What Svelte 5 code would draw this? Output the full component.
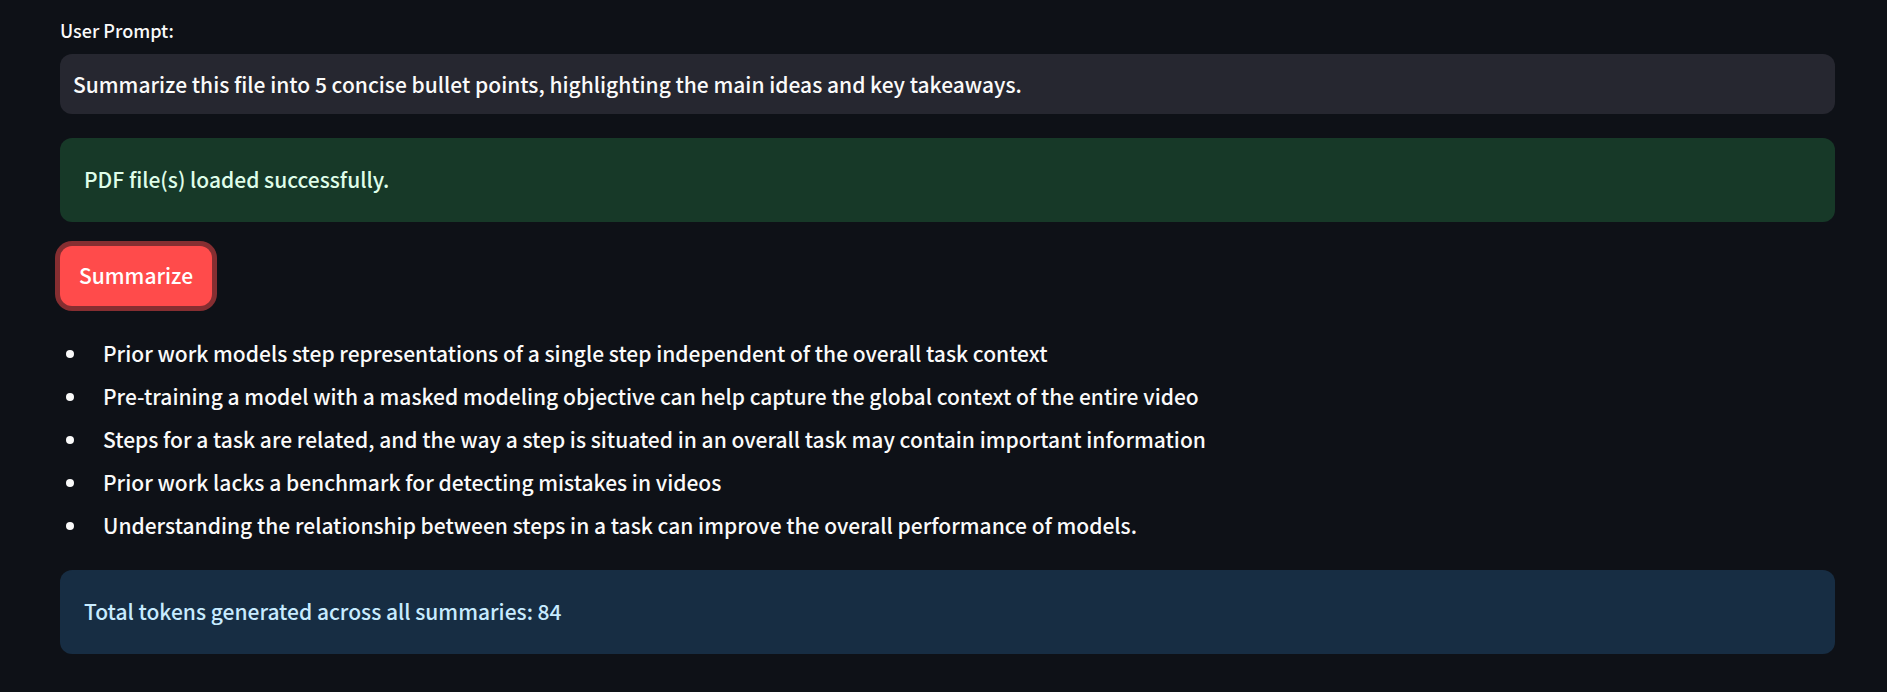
<script>
  let prompt = $state('Summarize this file into 5 concise bullet points, highlighting the main ideas and key takeaways.');
  const points = [
    'Prior work models step representations of a single step independent of the overall task context',
    'Pre-training a model with a masked modeling objective can help capture the global context of the entire video',
    'Steps for a task are related, and the way a step is situated in an overall task may contain important information',
    'Prior work lacks a benchmark for detecting mistakes in videos',
    'Understanding the relationship between steps in a task can improve the overall performance of models.'
  ];
</script>

<main>
  <label for="prompt">User Prompt:</label>
  <input id="prompt" type="text" bind:value={prompt} />
  <div class="alert success" role="status">PDF file(s) loaded successfully.</div>
  <button type="button">Summarize</button>
  <ul>
    {#each points as point}
      <li>{point}</li>
    {/each}
  </ul>
  <div class="alert info" role="status">Total tokens generated across all summaries: 84</div>
</main>

<style>
  :global(body) {
    margin: 0;
    background: #0e1117;
  }
  main {
    display: flex;
    flex-direction: column;
    padding: 16px 52px 38px 60px;
    font-family: 'Noto Sans CJK SC', 'Open Sans', sans-serif;
    font-size: 21px;
    font-weight: 500;
    line-height: 36px;
    color: #fafafa;
  }
  label {
    font-size: 18px;
    line-height: 28px;
    margin-bottom: 10px;
  }
  input {
    box-sizing: border-box;
    width: 100%;
    height: 60px;
    padding: 0 13px;
    border: 0;
    border-radius: 12px;
    outline: 0;
    background: #262730;
    color: inherit;
    font: inherit;
  }
  .alert {
    padding: 23px 24px 25px;
    border-radius: 12px;
  }
  .success {
    margin-top: 24px;
    background: #173928;
    color: #dffde9;
  }
  .info {
    background: #172d43;
    color: #c7ebff;
  }
  button {
    align-self: flex-start;
    height: 60px;
    margin: 24px 0 29px;
    padding: 0 19px 2px;
    border: 0;
    border-radius: 12px;
    background: #ff4b4b;
    box-shadow: 0 0 0 5px #862e31;
    color: #fff;
    font: inherit;
  }
  ul {
    margin: 0 0 20px;
    padding: 0 0 0 29px;
  }
  li {
    padding: 0 0 7px 14px;
  }
</style>
